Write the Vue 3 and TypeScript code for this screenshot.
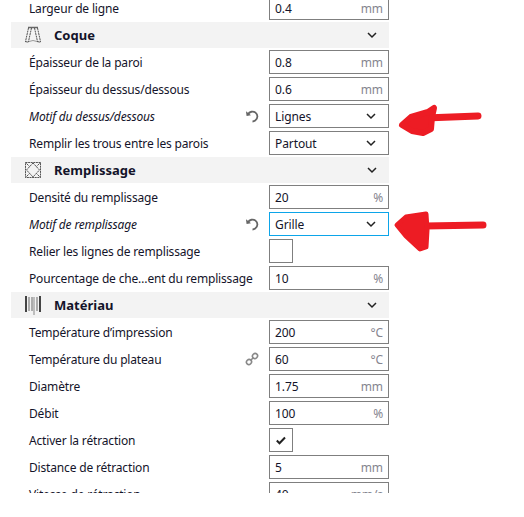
<template>
  <div class="page">
    <div class="panel">
      <div class="list">
        <template v-for="item in items" :key="item.label">
          <div v-if="item.kind === 'head'" class="head">
            <span class="head-icon">
              <svg v-if="item.icon === 'shell'" width="18" height="18" viewBox="0 0 18 18" fill="none" stroke="#555" stroke-width="1">
                <path d="M4 1.5h10" stroke-width="1.5" stroke="#666" />
                <path d="M4.5 2 1.5 15.5M7.5 2 4.5 15.5M10.5 2l3 13.5M13.5 2l3 13.5" stroke-dasharray="2 .6" />
                <path d="M1 15.5q3 1 4 0M13 15.5q3 1 4 0" />
                <path d="M5 15.5q4-2 8 0" stroke="#999" />
              </svg>
              <svg v-else-if="item.icon === 'infill'" width="18" height="18" viewBox="0 0 18 18" fill="none" stroke="#555" stroke-width="1">
                <rect x="1.5" y="1.5" width="15" height="15" stroke-dasharray="2 .6" />
                <path d="M1.5 1.5 6 6M16.5 1.5 12 6M1.5 16.5 6 12M16.5 16.5 12 12" stroke-dasharray="1.5 .6" />
                <path d="M9 2 15.5 9 9 16 2.5 9Z" stroke-dasharray="2 .6" />
              </svg>
              <svg v-else width="18" height="20" viewBox="0 0 18 20" fill="none" stroke="#444">
                <path d="M2 1v16M16 1v16" stroke-width="2" />
                <path d="M5 2v14M8 2v14M13 2v14" stroke="#666" />
                <path d="M10 2v18" stroke="#888" />
              </svg>
            </span>
            <span class="head-title">{{ item.label }}</span>
            <span class="head-chev">
              <svg width="10" height="7" viewBox="0 0 10 7" fill="none" stroke="#222" stroke-width="1.5"><path d="M1 1l4 4 4-4" /></svg>
            </span>
          </div>
          <div v-else class="row">
            <span class="label" :class="{ changed: item.changed }">{{ item.label }}</span>
            <span class="action">
              <svg v-if="item.changed" width="14" height="14" viewBox="0 0 14 14" fill="none" stroke="#666" stroke-width="1.8">
                <path d="M3 5.2C4.5 2.6 8 1.8 10.5 3.6c2.6 2 2.6 6-.3 8-1 .7-1.800 .9-2.700 .9" />
                <path d="M1 2.200 1.600 7l4.400-.8Z" fill="#666" stroke="none" />
              </svg>
              <svg v-else-if="item.linked" width="14" height="14" viewBox="0 0 14 14" fill="none" stroke="#888" stroke-width="1.600">
                <ellipse cx="4" cy="10" rx="2.600" ry="2.400" transform="rotate(-45 4 10)" />
                <ellipse cx="10" cy="4" rx="2.600" ry="2.400" transform="rotate(-45 10 4)" />
                <path d="M5.800 8.200 8.200 5.800" />
              </svg>
            </span>
            <div v-if="item.kind === 'input'" class="field">
              <span>{{ item.value }}</span><span class="unit">{{ item.unit }}</span>
            </div>
            <div v-else-if="item.kind === 'select'" class="field" :class="{ focus: item.focus }">
              <span>{{ item.value }}</span>
              <svg class="chev" width="10" height="7" viewBox="0 0 10 7" fill="none" stroke="#222" stroke-width="1.5"><path d="M1 1l4 4 4-4" /></svg>
            </div>
            <div v-else class="check-slot">
              <div class="check">
                <svg v-if="item.checked" width="10" height="9" viewBox="0 0 10 9" fill="none" stroke="#222" stroke-width="2"><path d="M.8 4.500 3.500 7.200 9 1.500" /></svg>
              </div>
            </div>
          </div>
        </template>
      </div>
    </div>

    <!-- red marker arrows scribbled over the screenshot -->
    <svg class="marks" width="524" height="517" viewBox="0 0 524 517" fill="#ed1c24" stroke="#ed1c24" stroke-linecap="round" stroke-linejoin="round">
      <path d="M425 118 478 116" stroke-width="7" fill="none" />
      <path d="M402 125 411 117 428 112 434 108 432 117 431 129 423 133 412 131Z" stroke-width="6" />
      <path d="M425 226 483 225" stroke-width="7" fill="none" />
      <path d="M397 225 406 217 426 214 427 230 426 247 420 249 406 236Z" stroke-width="5" />
    </svg>
  </div>
</template>

<script setup lang="ts">
interface Item {
  kind: 'head' | 'input' | 'select' | 'check'
  label: string
  icon?: string
  value?: string
  unit?: string
  changed?: boolean
  linked?: boolean
  focus?: boolean
  checked?: boolean
}

const items: Item[] = [
  { kind: 'input', label: 'Largeur de ligne', value: '0.4', unit: 'mm' },
  { kind: 'head', label: 'Coque', icon: 'shell' },
  { kind: 'input', label: 'Épaisseur de la paroi', value: '0.8', unit: 'mm' },
  { kind: 'input', label: 'Épaisseur du dessus/dessous', value: '0.6', unit: 'mm' },
  { kind: 'select', label: 'Motif du dessus/dessous', value: 'Lignes', changed: true },
  { kind: 'select', label: 'Remplir les trous entre les parois', value: 'Partout' },
  { kind: 'head', label: 'Remplissage', icon: 'infill' },
  { kind: 'input', label: 'Densité du remplissage', value: '20', unit: '%' },
  { kind: 'select', label: 'Motif de remplissage', value: 'Grille', changed: true, focus: true },
  { kind: 'check', label: 'Relier les lignes de remplissage' },
  { kind: 'input', label: 'Pourcentage de che…ent du remplissage', value: '10', unit: '%' },
  { kind: 'head', label: 'Matériau', icon: 'material' },
  { kind: 'input', label: 'Température d’impression', value: '200', unit: '°C' },
  { kind: 'input', label: 'Température du plateau', value: '60', unit: '°C', linked: true },
  { kind: 'input', label: 'Diamètre', value: '1.75', unit: 'mm' },
  { kind: 'input', label: 'Débit', value: '100', unit: '%' },
  { kind: 'check', label: 'Activer la rétraction', checked: true },
  { kind: 'input', label: 'Distance de rétraction', value: '5', unit: 'mm' },
  { kind: 'input', label: 'Vitesse de rétraction', value: '40', unit: 'mm/s' },
]
</script>

<style>
html, body {
  background: #fff;
}
</style>

<style scoped>
.page {
  position: relative;
  width: 524px;
  height: 517px;
  overflow: hidden;
  font-family: "Noto Sans", "Open Sans", sans-serif;
  font-size: 12px;
  color: #14142a;
}
.panel {
  width: 378px;
  height: 493px;
  margin-left: 11px;
  overflow: hidden;
}
.list {
  margin-top: -4px;
  display: flex;
  flex-direction: column;
}
.row {
  display: flex;
  align-items: center;
  height: 24px;
  margin-bottom: 3px;
  padding-left: 18px;
}
.label {
  flex: 1;
  min-width: 0;
  white-space: nowrap;
  letter-spacing: -0.17px;
}
.label.changed {
  font-style: italic;
}
.action {
  width: 14px;
  height: 14px;
  margin-right: 10px;
  display: flex;
}
.field {
  box-sizing: border-box;
  flex: none;
  width: 120px;
  height: 24px;
  border: 1px solid #7f7f7f;
  padding: 0 5px;
  display: flex;
  align-items: center;
  justify-content: space-between;
  background: #fff;
  letter-spacing: -0.1px;
}
.field.focus {
  border-color: #0ca5e9;
}
.unit {
  color: #85858f;
}
.chev {
  margin-right: 7px;
}
.check-slot {
  flex: none;
  width: 120px;
}
.check {
  box-sizing: border-box;
  width: 24px;
  height: 24px;
  border: 1px solid #7f7f7f;
  display: flex;
  align-items: center;
  justify-content: center;
}
.head {
  display: flex;
  align-items: center;
  height: 26px;
  margin: -1px 0 2px;
  background: #f3f3f3;
  padding-left: 13px;
}
.head-icon {
  width: 18px;
  display: flex;
  margin-right: 12px;
}
.head-title {
  flex: 1;
  font-weight: 700;
  font-size: 13px;
}
.head-chev {
  display: flex;
  margin-right: 12px;
}
.marks {
  position: absolute;
  left: 0;
  top: 0;
  pointer-events: none;
}
</style>
